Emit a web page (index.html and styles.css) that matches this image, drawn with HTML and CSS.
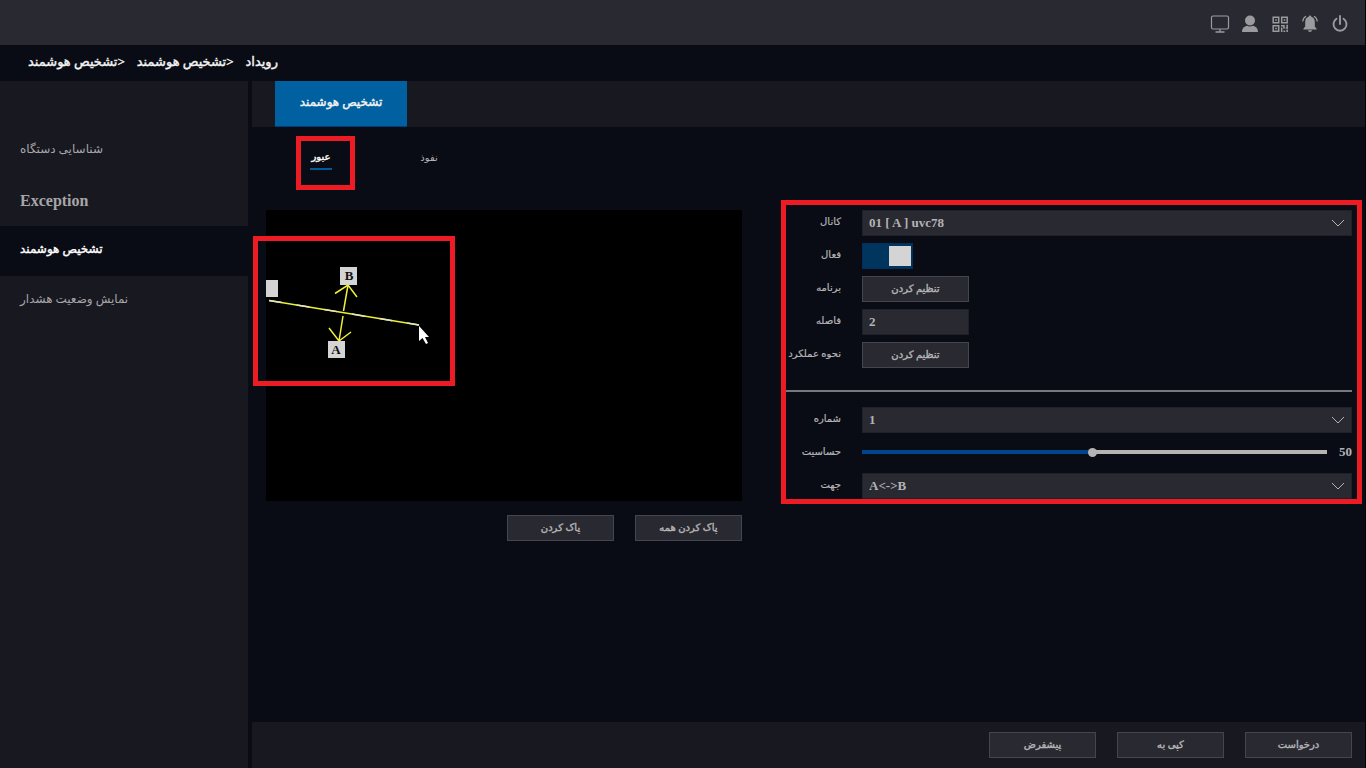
FILE: index.html
```html
<!DOCTYPE html>
<html lang="fa">
<head>
<meta charset="utf-8">
<title>تشخیص هوشمند</title>
<link rel="stylesheet" href="styles.css">
</head>
<body>
<div class="app">
  <header class="topbar">
    <button class="icon-btn" type="button" aria-label="Live view">
      <svg viewBox="0 0 20 20"><rect x="1.5" y="2" width="17" height="13" rx="1.5" fill="none" stroke="currentColor" stroke-width="1.2"/><path d="M10 15v2.5M5.500 18h9" fill="none" stroke="currentColor" stroke-width="1.3"/></svg>
    </button>
    <button class="icon-btn" type="button" aria-label="User">
      <svg viewBox="0 0 20 20" fill="currentColor"><circle cx="10" cy="6.500" r="5"/><path d="M2 18c0-4 2.500-5.800 5-6.300 2 1.100 4 1.100 6 0 2.500.5 5 2.300 5 6.300z"/></svg>
    </button>
    <button class="icon-btn" type="button" aria-label="QR code">
      <svg viewBox="0 0 20 20" fill="none" stroke="currentColor" stroke-width="1.5"><path d="M3.200 3.200h5.500v5.500H3.200zM11.700 3.200h5.500v5.500h-5.500zM3.200 11.700h5.500v5.500H3.200z"/><path d="M5.200 6h1.600M13.700 6h1.600M5.200 14.500h1.600M11 11.700h3v3M17.200 10.800v3.200h-1.500M11.700 13.500v4.500M13.500 17.200h1.800M17.200 15.500V18"/></svg>
    </button>
    <button class="icon-btn" type="button" aria-label="Alarm">
      <svg viewBox="0 0 20 20"><path d="M10 1.500c.8 0 1.300.6 1.300 1.300 2.300.6 3.500 2.600 3.500 5.200v4.500l1.800 2.300v.8H3.400v-.8l1.800-2.300V8c0-2.600 1.200-4.600 3.500-5.200 0-.7.500-1.300 1.300-1.300zM8 16.300h4c-.2 1.200-1 1.700-2 1.700s-1.800-.5-2-1.700z" fill="currentColor"/><path d="M6 2.200C4 3.300 2.900 5 2.700 7.500M14 2.200c2 1.100 3.100 2.800 3.300 5.300" fill="none" stroke="currentColor" stroke-width="1.2"/></svg>
    </button>
    <button class="icon-btn" type="button" aria-label="Power">
      <svg viewBox="0 0 20 20" fill="none" stroke="currentColor" stroke-width="1.9" stroke-linecap="round"><path d="M10 2v8M6.500 4.700a6.500 6.500 0 1 0 7 0"/></svg>
    </button>
  </header>

  <nav class="crumbs" dir="rtl">
    <a href="#">رویداد</a>
    <a href="#">&lt;تشخیص هوشمند</a>
    <a href="#">&lt;تشخیص هوشمند</a>
  </nav>

  <div class="body">
    <nav class="sidebar">
      <a class="side-item" href="#">شناسایی دستگاه</a>
      <a class="side-item latin" href="#">Exception</a>
      <a class="side-item active" href="#">تشخیص هوشمند</a>
      <a class="side-item" href="#">نمایش وضعیت هشدار</a>
    </nav>

    <main class="main">
      <div class="tabs"><button class="tab" type="button">تشخیص هوشمند</button></div>

      <div class="subtabs">
        <button class="subtab active" type="button">عبور</button>
        <button class="subtab" type="button">نفوذ</button>
      </div>

      <div class="content">
        <section class="preview">
          <div class="video">
            <svg class="drawing" viewBox="0 0 210 180">
              <rect x="0" y="70" width="12" height="17" fill="#d4d4d4"/>
              <path d="M3 90.500L153 115" fill="none" stroke="#eef032" stroke-width="1.500"/>
              <path d="M3 90.500L153 115" fill="none" stroke="#e4e4c8" stroke-width="1.500" stroke-dasharray="13 15"/>
              <path d="M82 75l-4.500 26M69 83.500l13-8.500 9 12M77 106l-4 25M63 118l10 13 12-9" fill="none" stroke="#f0f038" stroke-width="1.500"/>
              <rect x="74" y="57" width="17" height="18" fill="#d4d4d4"/>
              <rect x="62" y="131" width="17" height="17" fill="#d4d4d4"/>
              <text class="mark" x="83" y="70">B</text>
              <text class="mark" x="70" y="144">A</text>
              <path d="M153 116v15l3.500-3 3.500 6 2-1-3-6h4z" fill="#fff"/>
            </svg>
            <div class="highlight"></div>
          </div>
          <div class="actions">
            <button class="btn" type="button">پاک کردن</button>
            <button class="btn" type="button">پاک کردن همه</button>
          </div>
        </section>

        <form class="panel">
          <div class="fields">
            <label for="channel">کانال</label>
            <div class="select"><select id="channel"><option>01 [ A ] uvc78</option></select><svg viewBox="0 0 14 8"><path d="M1 1l6 6 6-6"/></svg></div>
            <label for="enable">فعال</label>
            <input class="toggle" id="enable" type="checkbox" checked>
            <label for="schedule">برنامه</label>
            <button class="btn" id="schedule" type="button">تنظیم کردن</button>
            <label for="interval">فاصله</label>
            <input class="text" id="interval" type="text" value="2">
            <label for="action">نحوه عملکرد</label>
            <button class="btn" id="action" type="button">تنظیم کردن</button>
          </div>
          <hr class="rule">
          <div class="fields">
            <label for="number">شماره</label>
            <div class="select"><select id="number"><option>1</option></select><svg viewBox="0 0 14 8"><path d="M1 1l6 6 6-6"/></svg></div>
            <label for="sens">حساسیت</label>
            <div class="slider"><input id="sens" type="range" min="1" max="100" value="50"><output for="sens">50</output></div>
            <label for="direction">جهت</label>
            <div class="select"><select id="direction"><option>A&lt;-&gt;B</option></select><svg viewBox="0 0 14 8"><path d="M1 1l6 6 6-6"/></svg></div>
          </div>
        </form>
      </div>

      <footer class="footer">
        <button class="btn" type="button">پیشفرض</button>
        <button class="btn" type="button">کپی به</button>
        <button class="btn" type="button">درخواست</button>
      </footer>
    </main>
  </div>
</div>
</body>
</html>
```
FILE: styles.css
```css
* { box-sizing: border-box; }
body {
  margin: 0;
  background: #0a0c15;
  color: #b4b4b4;
  font-family: "Liberation Serif", "DejaVu Sans", sans-serif;
  font-size: 10px;
}
button, input, select { font: inherit; color: inherit; }
button { cursor: pointer; }
a { color: inherit; text-decoration: none; }

.app {
  display: flex;
  flex-direction: column;
  min-height: 100vh;
  border-right: 1px solid #030408;
}
.topbar {
  display: flex;
  justify-content: flex-end;
  align-items: center;
  gap: 10px;
  height: 45px;
  padding: 2px 15px 0 0;
  background: #292932;
}
.icon-btn {
  width: 20px;
  height: 20px;
  padding: 0;
  border: 0;
  background: none;
  color: #9b9b9f;
}
.icon-btn svg { display: block; width: 20px; height: 20px; }

.crumbs {
  display: flex;
  justify-content: flex-end;
  align-items: center;
  gap: 12px;
  height: 36px;
  padding: 0 0 2px 28px;
  color: #f4f4f4;
  font-size: 13px;
}
/* Strengthens the regular weight while keeping its narrow letterforms */
.crumbs, .tab, .side-item.active, .subtab.active, .btn {
  -webkit-text-stroke: 0.4px currentColor;
}
.body { display: flex; flex: 1; gap: 4px; }
.sidebar {
  flex: 0 0 248px;
  padding-top: 45px;
  background: #181820;
}
.side-item {
  display: flex;
  align-items: center;
  height: 50px;
  padding: 0 20px 3px;
  color: #a6a6a8;
  font-size: 12px;
}
.side-item.latin { padding-bottom: 0; font-size: 16px; font-weight: bold; }
.side-item.active { background: #0a0c15; color: #fff; }

.main { display: flex; flex: 1; flex-direction: column; min-width: 0; }
.tabs { height: 46px; padding-left: 23px; background: #181820; }
.tab {
  width: 132px;
  height: 46px;
  padding: 0 0 3px;
  border: 0;
  border-bottom: 1px solid #003b7c;
  background: #0060a0;
  color: #f4f4f4;
  font-size: 12px;
}
.subtabs {
  display: flex;
  align-items: flex-start;
  gap: 86px;
  height: 73px;
  padding: 20px 0 0 58px;
}
.subtab {
  position: relative;
  width: 22px;
  height: 23px;
  padding: 0 0 3px;
  border: 0;
  background: none;
  white-space: nowrap;
}
.subtab.active { border-bottom: 2px solid #005a9c; color: #fff; }
.subtab.active::after {
  content: "";
  position: absolute;
  inset: -11px -23px -22px -14px;
  border: 5px solid #ed1c24;
}

.content {
  display: grid;
  flex: 1;
  grid-template-columns: minmax(0, 476fr) minmax(0, 581fr);
  gap: 39px;
  align-items: start;
  padding: 0 3px 20px 14px;
}
.preview { padding-top: 10px; }
.video { position: relative; aspect-ratio: 476 / 291; background: #000; }
.drawing { position: absolute; top: 0; left: 0; width: 210px; height: 180px; }
.mark { fill: #111; font-size: 13px; font-weight: bold; text-anchor: middle; }
.highlight {
  position: absolute;
  top: 26px;
  left: -13px;
  width: 202px;
  height: 150px;
  border: 5px solid #ed1c24;
}
.actions { display: flex; justify-content: flex-end; gap: 21px; padding-top: 14px; }
.btn {
  width: 107px;
  height: 26px;
  padding: 0 0 2px;
  border: 1px solid #44454d;
  background: #292932;
}

.panel {
  overflow: hidden;
  padding: 5px 5px 0 0;
  border: 5px solid #ed1c24;
}
.fields {
  display: grid;
  grid-template-columns: 55px minmax(0, 1fr);
  grid-auto-rows: 26px;
  gap: 7px 21px;
  align-items: center;
}
.fields label {
  direction: rtl;
  justify-self: end;
  padding-bottom: 4px;
  white-space: nowrap;
  -webkit-text-stroke: 0.2px currentColor;
}
.rule { height: 2px; margin: 22px 0 15px; border: 0; background: #77777c; }
.select { position: relative; }
.select select, .text {
  appearance: none;
  display: block;
  width: 100%;
  height: 26px;
  padding: 0 6px 1px;
  border: 1px solid #202029;
  border-radius: 0;
  background: #292932;
  font-size: 13px;
  font-weight: bold;
}
.text { width: 107px; }
.select svg {
  position: absolute;
  top: 9px;
  right: 7px;
  width: 14px;
  height: 8px;
  fill: none;
  stroke: #b4b4b4;
  pointer-events: none;
}
.toggle {
  appearance: none;
  display: flex;
  justify-content: flex-end;
  width: 51px;
  height: 26px;
  margin: 0;
  padding: 2px 1px;
  border: 1px solid #00305a;
  background: #00355f;
}
.toggle::before { content: ""; width: 22px; background: #d4d4d4; }
.toggle:not(:checked) { justify-content: flex-start; background: #292932; }
.slider { display: flex; align-items: center; gap: 12px; padding-bottom: 2px; }
.slider input {
  appearance: none;
  flex: 1;
  min-width: 0;
  height: 10px;
  margin: 0;
  background: linear-gradient(90deg, #00468c 49%, #b4b4b4 49%) center / 100% 4px no-repeat;
}
.slider input::-webkit-slider-thumb {
  appearance: none;
  width: 9px;
  height: 9px;
  border-radius: 50%;
  background: #b4b4b4;
}
.slider output { font-size: 13px; font-weight: bold; }

.footer {
  display: flex;
  justify-content: flex-end;
  align-items: center;
  gap: 21px;
  height: 46px;
  padding-right: 13px;
  background: #181820;
}
```
